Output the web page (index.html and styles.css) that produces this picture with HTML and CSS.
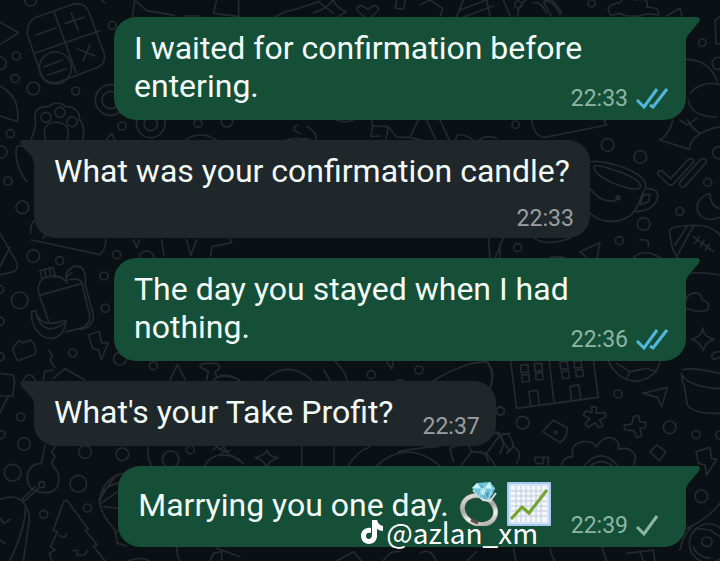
FILE: index.html
```
<!DOCTYPE html>
<html lang="en">
  <head>
    <meta charset="UTF-8" />
    <meta name="viewport" content="width=device-width, initial-scale=1.0" />
    <title>Chat</title>
    <link rel="stylesheet" href="styles.css">
  </head>
  <body>
    <!-- doodle wallpaper -->
    <svg class="wallpaper" viewBox="0 0 2160 1683" preserveAspectRatio="xMidYMid slice" aria-hidden="true">
      <!-- top left: calculator, paw, shapes -->
      <g>
        <path d="M108 52 215 14Q255 2 268 40L312 160Q320 192 290 203L185 243Q135 262 119 212L83 105Q78 65 108 52zM162 35 228 218M103 160 300 92M108 105 168 84M196 70 252 52M213 38 234 90M232 147 286 168M250 182 270 134" />
        <circle cx="166" cy="204" r="48" />
        <path d="M132 200 188 180M142 226 198 206M0 66 56 98 0 134M0 258Q62 290 52 364L0 348" />
        <path d="M398 50 404 0 440 32 524 46M640 40 650 0M640 40 720 50M555 48H600M306 0 314 10" />
        <path d="M92 420Q112 380 105 350 105 318 145 320 170 298 198 320 240 322 238 358 258 380 248 420" />
        <path d="M135 410Q125 370 168 366 212 370 203 412 195 455 168 455 140 450 135 410M80 545Q40 490 50 440 60 435 78 440" />
        <circle cx="138" cy="352" r="15" /><circle cx="180" cy="337" r="15" /><circle cx="216" cy="365" r="15" />
        <circle cx="337" cy="76" r="12" /><circle cx="49" cy="168" r="12" /><circle cx="0" cy="190" r="19" />
        <circle cx="45" cy="236" r="12" /><circle cx="100" cy="265" r="19" /><circle cx="227" cy="273" r="12" />
        <circle cx="332" cy="300" r="46" /><circle cx="332" cy="300" r="26" /><circle cx="92" cy="0" r="18" />
        <circle cx="31" cy="401" r="12" /><circle cx="3" cy="456" r="18" /><circle cx="24" cy="543" r="12" />
        <circle cx="67" cy="622" r="19" /><circle cx="366" cy="378" r="12" /><circle cx="452" cy="370" r="43" />
        <circle cx="452" cy="372" r="20" /><circle cx="594" cy="370" r="12" /><circle cx="681" cy="364" r="17" />
        <path d="M318 420 335 400 344 420M556 420Q600 390 650 420" />
      </g>
      <!-- top strip -->
      <path d="M716 0 716 50M770 150Q770 70 850 38 920 18 955 5M955 5 1000 40M940 38Q975 30 1000 0 1005 20 1038 35 1010 50 995 70M1070 30Q1076 4 1104 30 1130 4 1136 30L1104 60zM1190 0 1186 24 1210 28 1216 0M1260 14 1290 0 1328 26 1320 50M1390 0 1370 50M1380 30 1460 0M1392 50 1480 18" />
      <g>
        <path d="M1460 0 1470 48M1510 0 1530 48M1554 50Q1550 20 1578 0M1600 10Q1620 0 1640 40M1655 50 1630 5Q1660 -5 1680 45M1635 0Q1660 -10 1685 40M1832 46Q1810 14 1860 8 1876 -18 1905 0 1950 -10 1940 22 1980 20 1975 45 1935 38 1920 48 1870 50 1860 40zM1998 48 2040 25 2046 48M2146 60 2148 130 2160 132M2146 60 2160 50" />
        <circle cx="1555" cy="14" r="11" /><circle cx="1775" cy="10" r="11" /><circle cx="2107" cy="128" r="11" /><circle cx="2154" cy="190" r="18" />
        <path d="M2060 178Q2130 180 2152 245M2070 280Q2105 240 2160 254M2065 300Q2070 348 2150 352M2062 360Q2080 390 2100 400" />
      </g>
      <!-- between the first and second message -->
      <path d="M835 435Q880 395 960 435M880 435Q910 400 945 430 960 400 920 380M890 375Q870 390 900 400M1010 360Q1040 370 1060 360M1115 360 1118 378 1165 380 1155 435M1118 378 1112 410 1140 408M1165 380 1190 412 1230 412 1255 360M1230 412 1280 425M1280 360 1310 425M1320 360 1350 425M1360 435 1372 405Q1400 400 1430 430 1450 400 1490 415" />
      <!-- right: face cup, ticks, moon, ball -->
      <g transform="translate(1440 360)">
        <path d="M155 0Q162 50 195 52L380 15 372 0M540 60Q570 40 578 0M540 60 628 88Q630 40 720 20M600 0 622 15 650 -5" />
        <path d="M328 126Q360 118 430 142 510 175 495 205L470 262Q450 300 400 304 360 306 330 280M342 138Q350 130 430 160 490 185 480 204 460 215 390 185 340 160 342 138M330 205Q360 250 405 242M495 205Q540 205 532 235 520 275 462 275M490 225 510 222 505 245 480 255z" />
        <circle cx="414" cy="233" r="6" class="dot" />
        <path d="M535 165Q530 150 545 152L572 176 625 118Q640 112 642 125L580 192Q570 200 560 188zM598 188 662 118Q678 112 680 126L614 200Q600 206 598 188M690 220Q640 238 655 278 672 310 720 292M690 220Q690 260 720 266" />
        <path d="M570 342Q560 320 610 318 690 308 720 345M570 342Q575 400 600 420M622 318 585 375M640 318 590 410M640 350 700 395M645 370 658 350M660 382 672 360M676 392 688 372M300 395 360 368 350 420M300 395 318 410M165 355Q200 380 270 355M30 420 25 345M45 415 70 355M60 420 60 370M480 360Q510 355 505 380M455 420Q490 375 550 420M200 420Q230 400 265 420" />
        <circle cx="383" cy="75" r="19" /><circle cx="481" cy="111" r="19" /><circle cx="683" cy="187" r="12" />
        <circle cx="599" cy="274" r="12" /><circle cx="491" cy="312" r="19" /><circle cx="418" cy="362" r="12" />
        <circle cx="113" cy="383" r="12" /><circle cx="107" cy="14" r="11" /><circle cx="716" cy="98" r="18" />
      </g>
      <!-- left: bottle, banana, bolt -->
      <g transform="translate(0 720)">
        <path d="M92 -20Q90 -55 110 -62M95 0 300 44Q318 30 318 -8M128 -5Q140 -20 140 -15M0 -20 52 70Q55 95 30 98L0 104M0 80 30 20M400 0 410 22 418 0M485 0 492 48M560 0 572 46 590 0M632 48 636 20 696 8 690 -5" />
        <path d="M120 92 158 82 166 105 126 116zM134 90 138 112M148 86 152 108M126 116Q108 140 118 166L246 130Q240 110 195 122 180 105 160 112M118 166 146 245M246 130 270 230Q270 255 240 265L196 276M255 132 280 225Q282 262 240 268M200 130Q190 95 220 80 260 70 256 130M200 110 216 98" />
        <path d="M95 214 108 212 110 225Q130 262 180 245L198 242Q195 285 160 295 110 298 95 235zM110 230Q135 290 192 250" />
        <path d="M265 285 298 274 304 308 325 308 304 358 296 330 278 325zM38 325 56 302 68 308 92 300Q112 320 106 342L54 362Q44 350 38 325M146 330 158 345 150 360 164 382M130 420 134 395 160 390M160 415 195 386 255 420M0 400 40 405 44 430M70 420Q88 390 106 420" />
        <path d="M510 420 532 374 556 420M600 380Q600 370 620 370H650Q670 385 645 395L650 410M600 380 625 395 620 420M640 420Q670 395 710 415" />
        <circle cx="100" cy="48" r="19" /><circle cx="179" cy="62" r="12" /><circle cx="350" cy="44" r="12" /><circle cx="312" cy="108" r="12" />
        <circle cx="59" cy="181" r="25" /><circle cx="316" cy="205" r="12" /><circle cx="0" cy="244" r="12" /><circle cx="218" cy="339" r="12" />
        <circle cx="0" cy="350" r="12" /><circle cx="360" cy="356" r="19" /><circle cx="460" cy="377" r="12" /><circle cx="440" cy="55" r="22" /><circle cx="0" cy="148" r="11" />
      </g>
      <!-- bottom left: key, tree, balloon -->
      <g transform="translate(0 1140)">
        <path d="M0 48 38 48 44 5M24 50 0 98M135 195 125 245M165 200 155 215 165 230 155 245 160 260Q185 280 172 320 155 345 115 335 80 330 82 285 90 250 125 250" />
        <path d="M115 325 75 362 66 358 105 320M0 358Q50 340 72 370 95 400 85 440L70 543M75 385Q80 430 30 543M0 415 12 430 30 418M0 480 15 490" />
        <path d="M148 520 165 510 152 500 172 455 160 450 192 362 202 362 265 448 255 450 292 495 280 498 315 543M148 520 155 543M178 466Q195 480 200 460M220 512Q240 505 230 525 260 530 262 510" />
        <path d="M380 278Q310 290 298 360 300 400 345 450L352 490 380 498M350 285Q320 320 300 360M370 305Q320 315 305 340M360 330 302 370M358 385 310 380M362 445 345 460M530 500Q530 530 540 543M630 543 640 520 665 515 665 540M650 505 720 530M445 200Q440 240 455 255M615 255Q630 230 660 225 700 225 720 240M640 210 650 200 660 210 672 200 680 215 690 212" />
        <circle cx="62" cy="111" r="12" /><circle cx="72" cy="192" r="19" /><circle cx="255" cy="216" r="19" /><circle cx="367" cy="223" r="19" />
        <circle cx="38" cy="278" r="25" /><circle cx="235" cy="311" r="25" /><circle cx="131" cy="403" r="12" /><circle cx="262" cy="384" r="12" />
        <circle cx="512" cy="238" r="25" /><circle cx="571" cy="209" r="12" /><circle cx="125" cy="314" r="9" /><circle cx="3" cy="164" r="12" />
        <path d="M385 543Q420 528 450 543" />
      </g>
      <!-- around the fourth message -->
      <g transform="translate(660 1065)">
        <path d="M0 62Q50 65 60 78M132 78Q200 10 275 75M312 45 330 78M345 20Q375 45 382 78M500 20 515 42 520 20M640 78Q680 50 755 25L800 20Q830 50 810 95M530 78Q540 70 550 78M0 300Q20 280 12 290M0 280 70 325M140 285Q145 305 175 308 150 315 140 335 130 315 105 308 138 300 140 285M245 275V332M342 275V332M385 332Q410 290 450 275M470 332Q560 250 660 332M535 290Q620 275 655 275M700 320 690 280 740 260 755 290 725 330M755 290 800 295 840 240 870 235M800 295 825 330M815 220 840 245 870 290" />
        <circle cx="454" cy="59" r="12" /><circle cx="597" cy="45" r="12" /><circle cx="841" cy="167" r="12" />
      </g>
      <!-- right: building, pot, planet, star -->
      <g transform="translate(1440 720)">
        <path d="M618 205Q655 220 682 210 695 190 668 180 660 150 632 162 618 170 620 180M668 265Q670 290 702 298 675 305 670 332 660 305 635 298 665 290 668 265M625 100Q650 95 720 105M720 350Q700 365 695 350 695 335 720 335" />
        <path d="M92 365 110 505 355 472 340 362M208 365 222 488M122 375 144 374 145 396 123 398zM163 371 185 370 187 392 165 394zM125 405 147 403 148 424 127 426zM167 400 188 398 189 418 168 420zM240 366 262 364 264 386 242 388zM282 364 304 362 305 382 284 384zM245 395 267 393 268 414 247 416zM287 390 308 388 310 408 289 410zM152 500 147 455 172 450 178 494M275 480 270 440 296 434 302 475" />
        <path d="M385 362Q410 420 470 424 530 415 540 362M410 370 450 395 440 415M450 395 500 385 530 395M608 390Q630 380 720 400M604 400Q620 440 720 446M604 400 608 430M612 432 622 495Q640 522 720 520M0 510Q60 420 20 362" />
      </g>
      <g transform="translate(1440 1110)">
        <path d="M488 70 562 52 545 110 532 82zM188 185 220 150 262 175Q262 205 240 218zM335 110 350 112 348 130 375 128 378 140 358 150 370 168 355 172 345 158 325 172 315 162 330 146 310 135 318 122 336 128zM460 140 475 136 480 155 498 158 496 172 480 176 485 198 470 202 462 182 435 180 432 166 456 162z" />
        <path d="M510 245 530 225 558 245 538 272zM245 285Q250 260 278 260 270 220 310 215 335 212 350 230 370 195 400 205 420 215 415 238 450 228 465 255 470 270 460 285M315 285Q360 230 412 285M335 285Q360 265 395 285M648 245 690 232 694 265 710 268 680 315 675 285 655 280zM165 262H205V288M165 262Q160 285 190 280V265M0 245Q20 250 25 275M35 195Q65 170 70 225L60 250M70 190Q95 190 100 230L80 250M100 230Q130 245 110 280" />
        <path d="M620 475Q700 440 740 370M600 540Q610 490 640 465M636 490 650 475 690 480 720 500M665 520Q665 500 680 502 700 500 695 520 685 540 665 520M100 535 108 573M210 535Q215 560 225 573M365 530 380 573M440 550 520 540 525 573M480 545 490 573M640 530Q650 560 690 565" />
        <circle cx="686" cy="520" r="58" />
        <circle cx="414" cy="72" r="12" /><circle cx="128" cy="158" r="19" /><circle cx="569" cy="172" r="19" /><circle cx="648" cy="194" r="12" />
        <circle cx="664" cy="379" r="19" /><circle cx="61" cy="124" r="12" /><circle cx="720" cy="195" r="12" /><circle cx="227" cy="187" r="4" />
      </g>
      <path d="M1010 1683 1060 1655 1085 1683M1150 1683Q1170 1650 1200 1655M1260 1660Q1290 1640 1310 1683M1400 1683 1430 1655" />
    </svg>

    <main class="chat">
      <article class="message message-out">
        <p class="text">I waited for confirmation before entering.</p>
        <div class="meta">
          <time>22:33</time>
          <svg class="ticks read" viewBox="0 0 32 22" role="img" aria-label="Read"><path d="M1 12 8 19 21 1M14 17 17 19 31 1" /></svg>
        </div>
      </article>

      <article class="message message-in">
        <p class="text">What was your confirmation candle?</p>
        <div class="meta"><time>22:33</time></div>
      </article>

      <article class="message message-out">
        <p class="text">The day you stayed when I had nothing.</p>
        <div class="meta">
          <time>22:36</time>
          <svg class="ticks read" viewBox="0 0 32 22" role="img" aria-label="Read"><path d="M1 12 8 19 21 1M14 17 17 19 31 1" /></svg>
        </div>
      </article>

      <article class="message message-in short">
        <p class="text">What's your Take Profit?</p>
        <div class="meta"><time>22:37</time></div>
      </article>

      <article class="message message-out short with-emoji">
        <p class="text">Marrying you one day.</p>
        <div class="emojis">
          <svg class="emoji" viewBox="0 0 44 44" role="img" aria-label="Ring">
            <defs>
              <linearGradient id="silver" x1="0" y1="0" x2="1" y2="1">
                <stop offset="0" stop-color="#eeeeea" />
                <stop offset=".45" stop-color="#a5a6a1" />
                <stop offset=".65" stop-color="#f4f3ef" />
                <stop offset="1" stop-color="#8c8e8a" />
              </linearGradient>
            </defs>
            <ellipse cx="20" cy="28" rx="17" ry="14" transform="rotate(24 20 28)" fill="none" stroke="#8a8c86" stroke-width="5" />
            <ellipse cx="20" cy="28" rx="17" ry="14" transform="rotate(24 20 28)" fill="none" stroke="url(#silver)" stroke-width="4" />
            <path d="M12 38 19 41" stroke="#5b5048" stroke-width="3" />
            <path d="M14 8 24 18 31 19 37 11" fill="none" stroke="#ddd" stroke-width="2" />
            <path d="M13 6 18 1 31 0 36 6 34 12 29 18 20 15z" fill="#72c4d8" />
            <path d="M13 6 18 1 22 6zM26 6 31 0 33 7zM21 8 27 7 24 14z" fill="#d2f6fa" />
            <path d="M18 1 26 6 22 6zM33 7 36 6 34 12zM24 14 30 9 29 18z" fill="#459bbd" />
            <path d="M14 6 36 7M18 1 23 7 31 0 33 8 29 18 23 7 20 15" fill="none" stroke="#a5e0ea" />
          </svg>
          <svg class="emoji" viewBox="0 0 44 44" role="img" aria-label="Chart increasing">
            <rect width="44" height="44" rx="1" fill="#a9c8ed" />
            <rect x="2" y="2" width="40" height="40" fill="#d5e4f6" />
            <rect x="4" y="4" width="36" height="36" fill="#f3f7fb" />
            <path d="M9 4V40M14 4V40M19 4V40M24 4V40M29 4V40M34 4V40M4 9H40M4 14H40M4 19H40M4 24H40M4 29H40M4 34H40" stroke="#bdcad9" />
            <path d="M4 37 15 25 22 31 40 8" fill="none" stroke="#72a32b" stroke-width="3" />
          </svg>
        </div>
        <div class="meta">
          <time>22:39</time>
          <svg class="ticks" viewBox="0 0 32 22" role="img" aria-label="Sent"><path d="M1 12 8 19 21 1" /></svg>
        </div>
        <div class="watermark">
          <svg class="logo" viewBox="0 0 22 24" aria-hidden="true"><path d="M11 0h5q1 5 6 6v5q-3 0-6-2v7c0 5-4 8-8 8s-8-3-8-8 4-9 10-8v5c-3-1-5 0-5 3 0 4 6 4 6-1z" /></svg>
          <span>@azlan_xm</span>
        </div>
      </article>
    </main>
  </body>
</html>
```

FILE: styles.css
```
:root {
  --out: #154f38;
  --in: #20272b;
  --doodle: #242a2f;
}
* {
  box-sizing: border-box;
}
body {
  margin: 0;
  min-height: 100vh;
  background: #0b1014;
  color: #f2fbf7;
  font-family: Roboto, "Liberation Sans", sans-serif;
  position: relative;
  overflow-x: hidden;
}
.wallpaper {
  position: absolute;
  top: 0;
  left: 0;
  width: 100%;
  height: 100%;
  fill: none;
  stroke: var(--doodle);
  stroke-width: 5;
  stroke-linejoin: round;
  stroke-linecap: round;
}
.wallpaper .dot {
  fill: var(--doodle);
}
.chat {
  position: relative;
  display: flex;
  flex-direction: column;
  align-items: flex-start;
  gap: 20px;
  padding: 17px 34px 14px;
}
.message {
  position: relative;
  display: flex;
  flex-direction: column;
  max-width: calc(100% - 80px);
  padding: 12px 18px 7px 20px;
  border-radius: 22px;
}
.message-out {
  align-self: flex-end;
  background: var(--out);
  border-top-right-radius: 0;
}
.message-in {
  background: var(--in);
  border-top-left-radius: 0;
  padding: 12px 16px 5px 20px;
}
/* bubble tails */
.message::before {
  content: "";
  position: absolute;
  top: 0;
  width: 15px;
  height: 22px;
}
.message-out::before {
  left: calc(100% - 1px);
  background: var(--out);
  clip-path: polygon(0 0, 13px 0, 15px 2px, 14px 5px, 3px 18px, 1px 22px, 0 22px);
}
.message-in::before {
  right: calc(100% - 1px);
  background: var(--in);
  clip-path: polygon(100% 0, 2px 0, 0 2px, 1px 5px, 12px 17px, 14px 22px, 100% 22px);
}
.text {
  margin: 0;
  font-size: 32px;
  line-height: 38px;
}
.message-in .text {
  padding-right: 4px;
}
.meta {
  display: flex;
  align-items: center;
  align-self: flex-end;
  gap: 8px;
  font-size: 23px;
  line-height: 28px;
  color: #8fb5a2;
}
.message-out .meta {
  margin-top: -20px;
}
.message-in .meta {
  margin-top: 15px;
  color: #9a9fa1;
}
.ticks {
  width: 32px;
  height: 22px;
  fill: none;
  stroke: currentColor;
  stroke-width: 3;
}
.read {
  color: #53b7dc;
}
/* time on the same line as the text */
.short {
  flex-direction: row;
  gap: 25px;
}
.message-in.short .meta {
  margin-top: 20px;
}
.with-emoji {
  gap: 10px;
  padding-top: 16px;
  padding-bottom: 7px;
}
.with-emoji .text {
  padding: 4px 0 16px;
}
.emojis {
  display: flex;
  gap: 4px;
}
.emoji {
  width: 44px;
  height: 44px;
}
.with-emoji .meta {
  margin-left: 10px;
}
.watermark {
  position: absolute;
  left: 243px;
  bottom: -1px;
  display: flex;
  align-items: center;
  gap: 3px;
  color: #fff;
  font-family: "Noto Sans CJK SC", "Noto Sans", sans-serif;
  font-size: 28px;
  line-height: 32px;
}
.logo {
  width: 22px;
  height: 24px;
  fill: #fff;
}
```
